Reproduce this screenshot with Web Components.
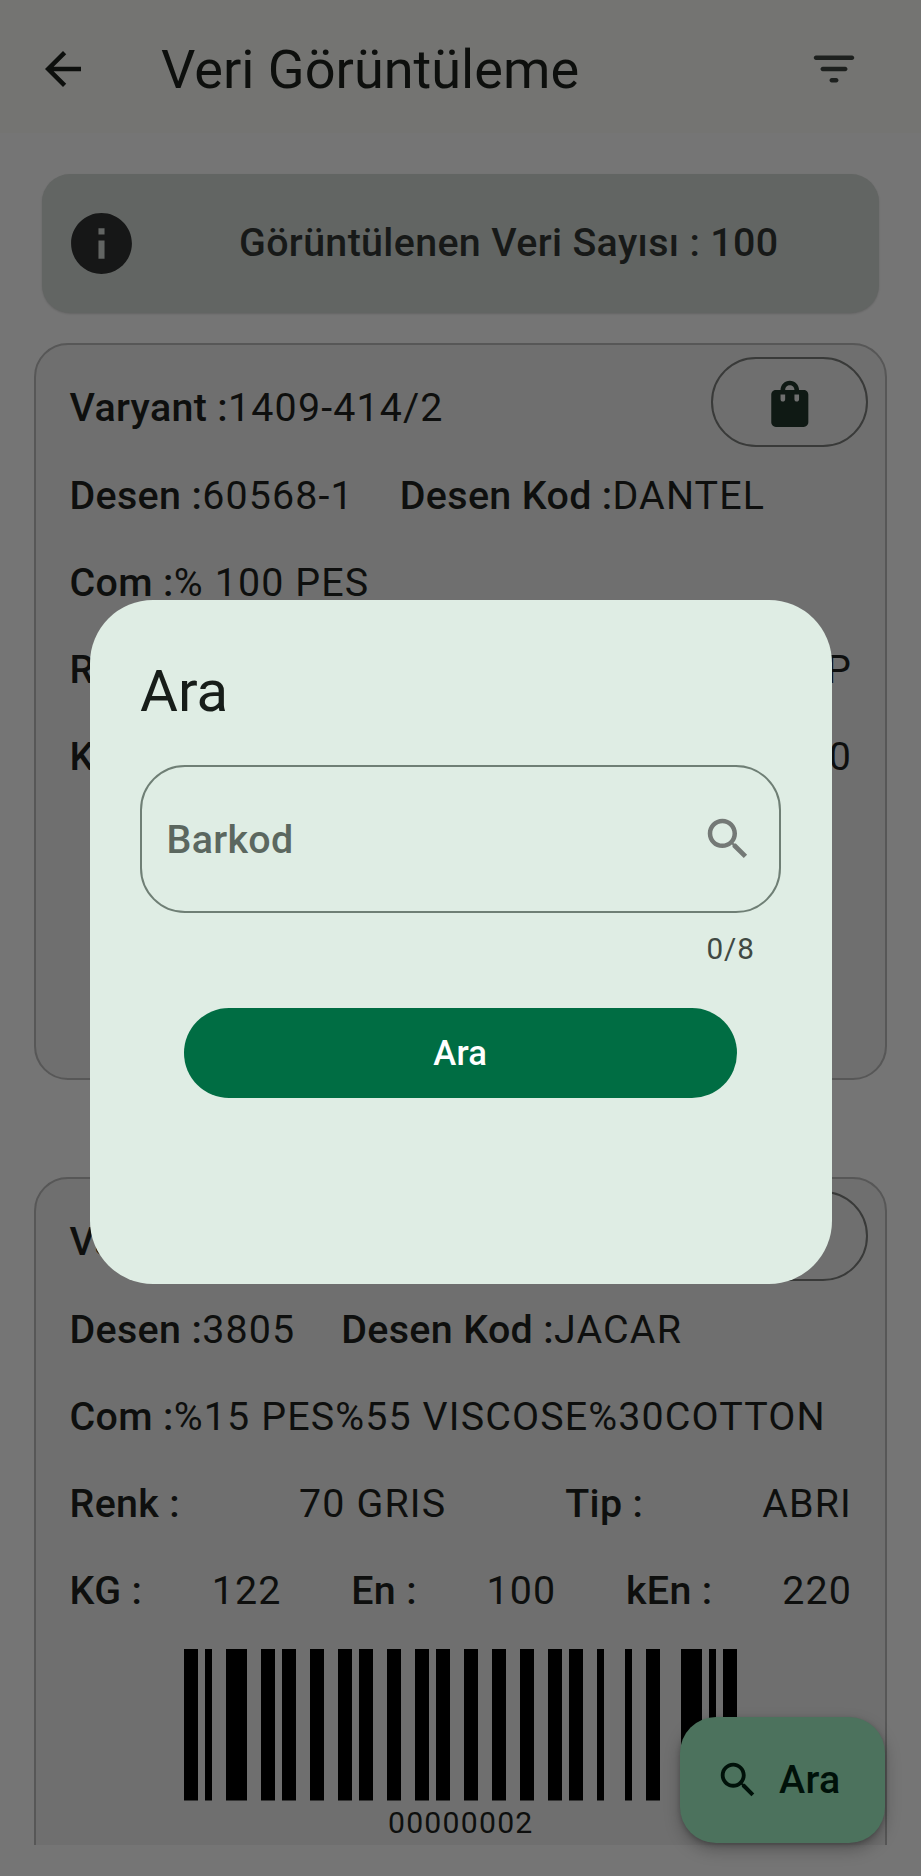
<!DOCTYPE html>
<html lang="tr">
<head>
<meta charset="utf-8">
<title>Veri Görüntüleme</title>
<style>
html, body { margin: 0; padding: 0; }
body { width: 921px; height: 1876px; overflow: hidden; background: #757575; font-family: Roboto, "Noto Sans", sans-serif; color: #0e0f0e; }
</style>
</head>
<body>
<data-page></data-page>
<script>
const define = (name, html, setup) => {
  const template = document.createElement('template');
  template.innerHTML = html;
  customElements.define(name, class extends HTMLElement {
    constructor() {
      super();
      this.attachShadow({ mode: 'open' }).append(template.content.cloneNode(true));
    }
    connectedCallback() { if (setup) setup(this, this.shadowRoot); }
  });
};

const ICONS = {
  back: 'M7.825 13l5.6 5.6L12 20l-8-8 8-8 1.425 1.4-5.6 5.6H20v2z',
  filter: 'M11 18h2c.55 0 1-.45 1-1s-.45-1-1-1h-2c-.55 0-1 .45-1 1s.45 1 1 1zM3 7c0 .55.45 1 1 1h16c.55 0 1-.45 1-1s-.45-1-1-1H4c-.55 0-1 .45-1 1zm4 6h10c.55 0 1-.45 1-1s-.45-1-1-1H7c-.55 0-1 .45-1 1s.45 1 1 1z',
  info: 'M12 2C6.48 2 2 6.48 2 12s4.48 10 10 10 10-4.48 10-10S17.52 2 12 2zm1 15h-2v-6h2v6zm0-8h-2V7h2v2z',
  bag: 'M18 6h-2c0-2.21-1.79-4-4-4S8 3.79 8 6H6c-1.1 0-2 .9-2 2v12c0 1.1.9 2 2 2h12c1.1 0 2-.9 2-2V8c0-1.1-.9-2-2-2zm-8 4c0 .55-.45 1-1 1s-1-.45-1-1V8h2v2zm2-6c1.1 0 2 .9 2 2h-4c0-1.1.9-2 2-2zm4 6c0 .55-.45 1-1 1s-1-.45-1-1V8h2v2z',
  search: 'M15.5 14h-.79l-.28-.27C15.41 12.59 16 11.11 16 9.5 16 5.91 13.09 3 9.5 3S3 5.91 3 9.5 5.91 16 9.5 16c1.61 0 3.09-.59 4.23-1.57l.27.28v.79l5 4.99L20.49 19l-4.99-5zm-6 0C7.01 14 5 11.99 5 9.5S7.01 5 9.5 5 14 7.01 14 9.5 11.99 14 9.5 14z'
};

define('md-icon', `
  <style>:host{display:block;flex:none;width:54px;height:54px} svg{display:block;width:100%;height:100%}</style>
  <svg viewBox="0 0 24 24" fill="currentColor" fill-rule="evenodd"><path/></svg>`,
  (el, root) => root.querySelector('path').setAttribute('d', ICONS[el.getAttribute('name')]));

define('app-bar', `
  <style>
    :host{display:flex;align-items:center;box-sizing:border-box;height:133px;padding:5px 60.5px 0 36px;background:#747472}
    h1{margin:2px 0 0 71px;flex:1;font-size:54.1px;font-weight:400;line-height:64px;color:#0d0f0d}
    md-icon{color:#0d0f0d} .f{color:#1d201e}
  </style>
  <md-icon name="back"></md-icon><h1><slot></slot></h1><md-icon class="f" name="filter"></md-icon>`);

define('info-banner', `
  <style>
    :host{display:flex;align-items:center;box-sizing:border-box;height:139px;margin:41px 42px 0;padding-left:23px;border-radius:28px;background:#626563;color:#171918;box-shadow:0 1px 2px rgba(0,0,0,.15)}
    md-icon{width:73px;height:73px;margin-bottom:1px;color:#161717}
    p{flex:1;margin:0 0 2px 101px;font-size:39.4px;font-weight:500;letter-spacing:.34px;line-height:54px;white-space:nowrap}
  </style>
  <md-icon name="info"></md-icon><p><slot></slot></p>`);

define('data-row', `
  <style>
    :host{display:flex;align-items:center;height:87.25px;font-size:39.4px;letter-spacing:1.13px;white-space:nowrap;line-height:48px}
    :host([spread]){justify-content:space-between}
    ::slotted(b){font-weight:500;letter-spacing:.34px}
    ::slotted(.next){margin-left:46px}
    ::slotted(outline-button){margin:0 -16px 12px auto}
  </style><slot></slot>`);

define('outline-button', `
  <style>
    :host{display:flex;align-items:center;justify-content:center;box-sizing:border-box;width:157px;height:90px;border:2px solid #393a39;border-radius:45px;color:#0f1914}
    md-icon{width:55.6px;height:55.6px;margin-top:2px}
  </style><md-icon name="bag"></md-icon>`);

define('bar-code', `
  <style>
    :host{display:flex;flex-direction:column;align-items:center;margin-top:14px;font-size:30.2px;letter-spacing:1.24px;line-height:36px}
    svg{display:block;width:553px;height:151.5px;margin-bottom:4px}
  </style>
  <svg viewBox="0 0 79 10" preserveAspectRatio="none" fill="#000"></svg><slot></slot>`,
  (el, root) => {
    const bars = [[0,2],[3,1],[6,3],[11,2],[14,2],[18,2],[22,2],[25,2],[29,2],[33,2],[36,2],[40,2],[44,2],[48,2],[52,2],[55,2],[59,1],[63,1],[66,2],[71,3],[75,1],[77,2]];
    root.querySelector('svg').innerHTML = bars.map(([x, w]) => `<rect x="${x}" width="${w}" height="10"/>`).join('');
  });

define('data-card', `
  <style>
    :host{display:block;flex:none;box-sizing:border-box;height:737px;margin:0 34px 97px;padding:19.75px 33px 0 33.5px;border:2px solid #575757;border-radius:34px;background:#6f6f6f}
  </style><slot></slot>`);

define('search-field', `
  <style>
    :host{display:block}
    .box{display:flex;align-items:center;justify-content:space-between;box-sizing:border-box;height:148px;padding:0 24px 0 24.5px;border:2px solid #6f7f75;border-radius:45px;color:#5b675f;font-size:39.4px;font-weight:500;letter-spacing:.3px}
    .box span{margin-top:1px}
    md-icon{color:#747976}
    .count{display:block;margin-top:17px;padding-right:25.5px;text-align:right;font-size:29.7px;line-height:38px;letter-spacing:1px;color:#404943}
  </style>
  <div class="box"><span><slot></slot></span><md-icon name="search"></md-icon></div><span class="count">0/8</span>`);

define('search-dialog', `
  <style>
    :host{position:absolute;left:89.5px;top:600px;box-sizing:border-box;width:742px;height:684px;padding:56px 51px 0 50.5px;border-radius:63px;background:#dfede4}
    h2{margin:0;font-size:58.2px;font-weight:400;line-height:70px;color:#171d19}
    search-field{margin-top:39px}
    .go{display:flex;align-items:center;justify-content:center;box-sizing:border-box;height:90px;margin:40px 44px 0;border-radius:45px;background:#006d43;color:#fff;font-size:34.65px;font-weight:500;letter-spacing:.25px}
  </style>
  <h2>Ara</h2><search-field>Barkod</search-field><div class="go">Ara</div>`);

define('search-fab', `
  <style>
    :host{position:absolute;left:680px;top:1716.5px;display:flex;align-items:center;box-sizing:border-box;width:205px;height:126px;padding-left:35px;border-radius:36px;background:#4c725d;color:#001109;font-size:39.4px;font-weight:500;letter-spacing:.34px;box-shadow:0 7px 16px rgba(0,0,0,.26),0 2px 5px rgba(0,0,0,.2)}
    md-icon{width:46px;height:46px} span{margin-left:18px}
  </style>
  <md-icon name="search"></md-icon><span><slot></slot></span>`);

define('data-page', `
  <style>
    :host{display:flex;flex-direction:column;position:relative;width:921px;height:1876px;overflow:hidden;background:#757575}
    .list{display:flex;flex-direction:column;height:1501.5px;margin-top:30px;overflow:hidden}
  </style>
  <app-bar>Veri Görüntüleme</app-bar>
  <info-banner>Görüntülenen Veri Sayısı : 100</info-banner>
  <div class="list">
    <data-card>
      <data-row><b>Varyant :</b><span>1409-414/2</span><outline-button></outline-button></data-row>
      <data-row><b>Desen :</b><span>60568-1</span><b class="next">Desen Kod :</b><span>DANTEL</span></data-row>
      <data-row><b>Com :</b><span>% 100 PES</span></data-row>
      <data-row spread><b>Renk :</b><span>P</span></data-row>
      <data-row spread><b>KG :</b><span>0</span></data-row>
    </data-card>
    <data-card>
      <data-row><b>Varyant :</b><outline-button></outline-button></data-row>
      <data-row><b>Desen :</b><span>3805</span><b class="next">Desen Kod :</b><span>JACAR</span></data-row>
      <data-row><b>Com :</b><span>%15 PES%55 VISCOSE%30COTTON</span></data-row>
      <data-row spread><b>Renk :</b><span>70 GRIS</span><b>Tip :</b><span>ABRI</span></data-row>
      <data-row spread><b>KG :</b><span>122</span><b>En :</b><span>100</span><b>kEn :</b><span>220</span></data-row>
      <bar-code>00000002</bar-code>
    </data-card>
  </div>
  <search-fab>Ara</search-fab>
  <search-dialog></search-dialog>`);
</script>
</body>
</html>
